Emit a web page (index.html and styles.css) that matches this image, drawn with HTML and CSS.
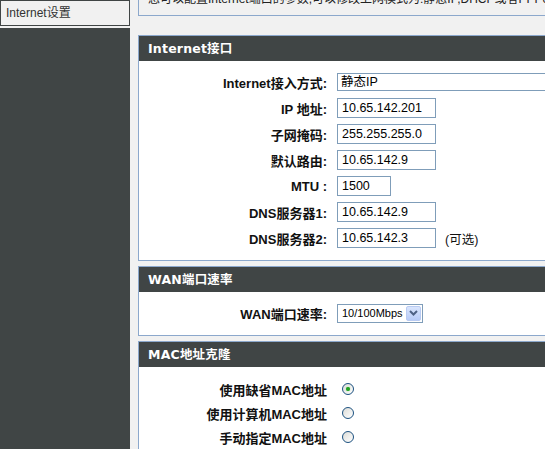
FILE: index.html
```html
<!DOCTYPE html>
<html lang="zh-CN">
<head>
<meta charset="utf-8">
<title>Internet设置</title>
<link rel="stylesheet" href="styles.css">
</head>
<body>
<div class="sidebar">
  <div class="side-item">Internet设置</div>
  <div class="side-fill"></div>
</div>
<div class="main">
  <div class="intro">您可以配置Internet端口的参数,可以修改上网模式为:静态IP,DHCP或者PPPoE,并设置相应的参数。</div>

  <div class="panel panel-first">
    <div class="panel-head">Internet接口</div>
    <div class="form">
      <div class="lbl">Internet接入方式:</div>
      <div class="val"><div class="combo">静态IP</div></div>

      <div class="lbl">IP 地址:</div>
      <div class="val"><input class="txt" type="text" value="10.65.142.201"></div>

      <div class="lbl">子网掩码:</div>
      <div class="val"><input class="txt" type="text" value="255.255.255.0"></div>

      <div class="lbl">默认路由:</div>
      <div class="val"><input class="txt" type="text" value="10.65.142.9"></div>

      <div class="lbl">MTU :</div>
      <div class="val"><input class="txt txt-short" type="text" value="1500"></div>

      <div class="lbl">DNS服务器1:</div>
      <div class="val"><input class="txt" type="text" value="10.65.142.9"></div>

      <div class="lbl">DNS服务器2:</div>
      <div class="val"><input class="txt" type="text" value="10.65.142.3"><span class="note">(可选)</span></div>
    </div>
  </div>

  <div class="panel">
    <div class="panel-head">WAN端口速率</div>
    <div class="form">
      <div class="lbl">WAN端口速率:</div>
      <div class="val">
        <div class="select">
          <span class="select-text">10/100Mbps</span>
          <span class="select-btn"><svg width="9" height="6" viewBox="0 0 9 6"><path d="M1 1 L4.5 4.5 L8 1" fill="none" stroke="#4d6185" stroke-width="2"/></svg></span>
        </div>
      </div>
    </div>
  </div>

  <div class="panel">
    <div class="panel-head">MAC地址克隆</div>
    <div class="form form-radio">
      <div class="lbl">使用缺省MAC地址</div>
      <div class="val"><span class="radio checked"></span></div>

      <div class="lbl">使用计算机MAC地址</div>
      <div class="val"><span class="radio"></span></div>

      <div class="lbl">手动指定MAC地址</div>
      <div class="val"><span class="radio"></span></div>
    </div>
  </div>
</div>
</body>
</html>
```
FILE: styles.css
```css
html, body {
  margin: 0;
  padding: 0;
}
body {
  display: flex;
  height: 449px;
  overflow: hidden;
  background: #f1f1f1;
  font-family: "Liberation Sans", "Noto Sans CJK SC", sans-serif;
  color: #111;
}
.sidebar {
  width: 130px;
  flex-shrink: 0;
  display: flex;
  flex-direction: column;
}
.side-item {
  height: 26px;
  box-sizing: border-box;
  border: 1px solid #404545;
  background: #f1f1f1;
  padding-left: 5px;
  line-height: 24px;
  font-size: 12px;
  color: #333;
  margin-bottom: 2px;
}
.side-fill {
  flex: 1;
  background: #404545;
}
.main {
  padding-left: 8px;
  width: 620px;
  flex-shrink: 0;
}
.intro {
  margin-top: -14px;
  border: 1px solid #8ca8cc;
  padding: 4px 9px 8px;
  line-height: 16px;
  font-size: 12px;
  white-space: nowrap;
  overflow: hidden;
  color: #222;
}
.panel {
  margin-top: 5px;
  border: 1px solid #8ca8cc;
  background: #fff;
}
.panel-first {
  margin-top: 19px;
}
.panel-head {
  background: #404545;
  color: #fff;
  height: 25px;
  line-height: 25px;
  padding-left: 9px;
  font-family: "DejaVu Sans", "Noto Sans CJK SC", sans-serif;
  font-weight: bold;
  font-size: 12.5px;
  letter-spacing: 0.2px;
}
.form {
  display: grid;
  grid-template-columns: 188px auto;
  column-gap: 10px;
  grid-auto-rows: 26px;
  align-items: center;
  padding: 8px 0 9px;
}
.form-radio {
  grid-auto-rows: 24px;
  padding: 10px 0 0;
}
.lbl {
  text-align: right;
  font-weight: bold;
  font-size: 13px;
  color: #111;
  white-space: nowrap;
}
.val {
  display: flex;
  align-items: center;
}
.txt {
  box-sizing: border-box;
  width: 99px;
  height: 20px;
  border: 1px solid #7f9db9;
  padding: 0 4px;
  margin: 0;
  font-family: "Liberation Sans", "Noto Sans CJK SC", sans-serif;
  font-size: 12.5px;
  color: #000;
  background: #fff;
  outline: none;
}
.txt-short {
  width: 54px;
}
.combo {
  box-sizing: border-box;
  width: 260px;
  height: 18px;
  border: 1px solid #7f9db9;
  padding-left: 3px;
  line-height: 16px;
  font-size: 12.5px;
  color: #000;
}
.note {
  margin-left: 9px;
  font-size: 12.5px;
  color: #111;
}
.select {
  position: relative;
  box-sizing: border-box;
  width: 86px;
  height: 19px;
  border: 1px solid #7f9db9;
  background: #fff;
  padding-left: 4px;
  line-height: 17px;
  font-size: 11px;
  color: #000;
  white-space: nowrap;
}
.select-btn {
  position: absolute;
  right: 1px;
  top: 1px;
  width: 15px;
  height: 15px;
  box-sizing: border-box;
  border: 1px solid #b9cbf3;
  border-radius: 2px;
  background: linear-gradient(#d9e5fd, #b7cbf8);
  display: flex;
  align-items: center;
  justify-content: center;
}
.select-btn svg {
  display: block;
}
.radio {
  margin-left: 5px;
  width: 12px;
  height: 12px;
  box-sizing: border-box;
  border: 1px solid #1c5180;
  border-radius: 50%;
  background: linear-gradient(135deg, #dcdcd7, #ffffff);
  display: flex;
  align-items: center;
  justify-content: center;
}
.radio.checked::after {
  content: "";
  width: 4px;
  height: 4px;
  border-radius: 50%;
  background: #21a121;
  box-shadow: 0 0 1px #5fd35f;
}
```
